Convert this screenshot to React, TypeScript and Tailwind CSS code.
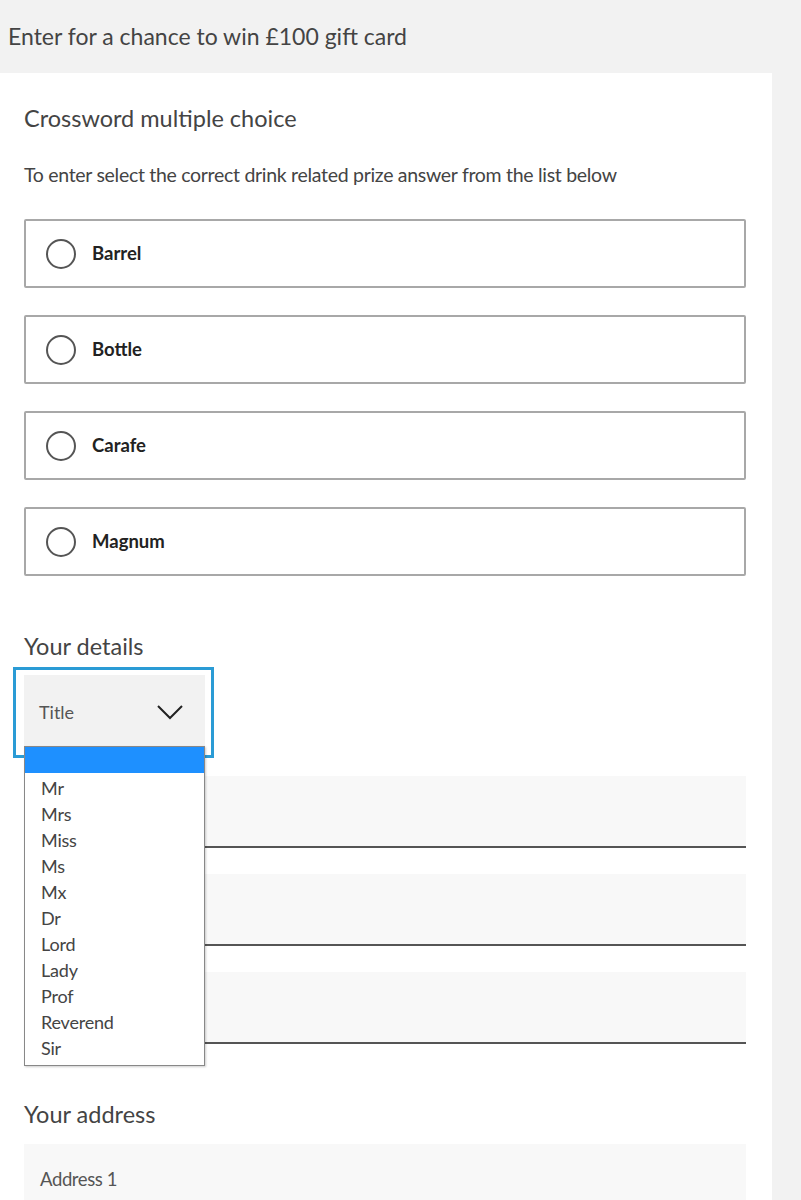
import React from "react";

const options = ["Barrel", "Bottle", "Carafe", "Magnum"];
const titles = ["Mr", "Mrs", "Miss", "Ms", "Mx", "Dr", "Lord", "Lady", "Prof", "Reverend", "Sir"];

export default function App() {
  return (
    <div
      className="min-h-[1200px] w-[801px] bg-[#f2f2f2] text-[#333]"
      style={{ fontFamily: "Lato, 'Open Sans', sans-serif" }}
    >
      <div className="h-[73px] pl-[8px] pt-[20px] text-[23px] leading-[32px] text-[#444]">
        Enter for a chance to win £100 gift card
      </div>
      <div className="w-[772px] bg-white px-[24px] pb-[40px]">
        <div className="h-[86px] pt-[29px] text-[23.5px] leading-[32px] text-[#444]">
          Crossword multiple choice
        </div>
        <div className="h-[60px] pt-[3px] text-[19.5px] leading-[26px] tracking-[-0.3px] text-[#444]">
          To enter select the correct drink related prize answer from the list below
        </div>
        <div className="flex w-[722px] flex-col gap-[27px]">
          {options.map((o) => (
            <div
              key={o}
              className="flex h-[69px] items-center gap-[16px] rounded-[2px] border-2 border-[#a8a8a8] pl-[20px]"
            >
              <span className="h-[30px] w-[30px] rounded-full border-2 border-[#555]" />
              <span className="text-[18.5px] font-bold text-[#222]">{o}</span>
            </div>
          ))}
        </div>
        <div className="pt-[54px] text-[23.5px] leading-[32px] text-[#444]">Your details</div>
        <div className="relative mt-[5px]">
          <div className="ml-[-11px] w-[201px] border-[3px] border-[#2a9bd5] bg-white pb-[6px] pl-[8px] pr-[6px] pt-[5px]">
            <div className="flex h-[74px] items-center justify-between bg-[#f2f2f2] pl-[15px] pr-[22px]">
              <span className="text-[18px] text-[#555]">Title</span>
              <svg width="26" height="16" viewBox="0 0 26 16" fill="none">
                <path d="M1 2 L13 14 L25 2" stroke="#222" strokeWidth="2" />
              </svg>
            </div>
          </div>
          <div className="mt-[18px] flex w-[722px] flex-col gap-[26px]">
            {[0, 1, 2].map((i) => (
              <div key={i} className="h-[72px] border-b-2 border-[#555] bg-[#f8f8f8]" />
            ))}
          </div>
          <div className="absolute left-0 top-[79px] w-[181px] border border-[#888] bg-white shadow-[1px_1px_2px_rgba(0,0,0,0.2)]">
            <div className="h-[26px] bg-[#1e90ff]" />
            <div className="pb-[6px]">
              {titles.map((t) => (
                <div key={t} className="h-[26px] pl-[16px] text-[18px] leading-[30px] tracking-[-0.2px] text-[#444]">
                  {t}
                </div>
              ))}
            </div>
          </div>
        </div>
        <div className="pt-[54px] text-[23.5px] leading-[32px] text-[#444]">Your address</div>
        <div className="mt-[14px] flex h-[72px] w-[722px] items-center bg-[#f8f8f8] pl-[16px] text-[18.5px] tracking-[-0.4px] text-[#555]">
          Address 1
        </div>
      </div>
    </div>
  );
}
